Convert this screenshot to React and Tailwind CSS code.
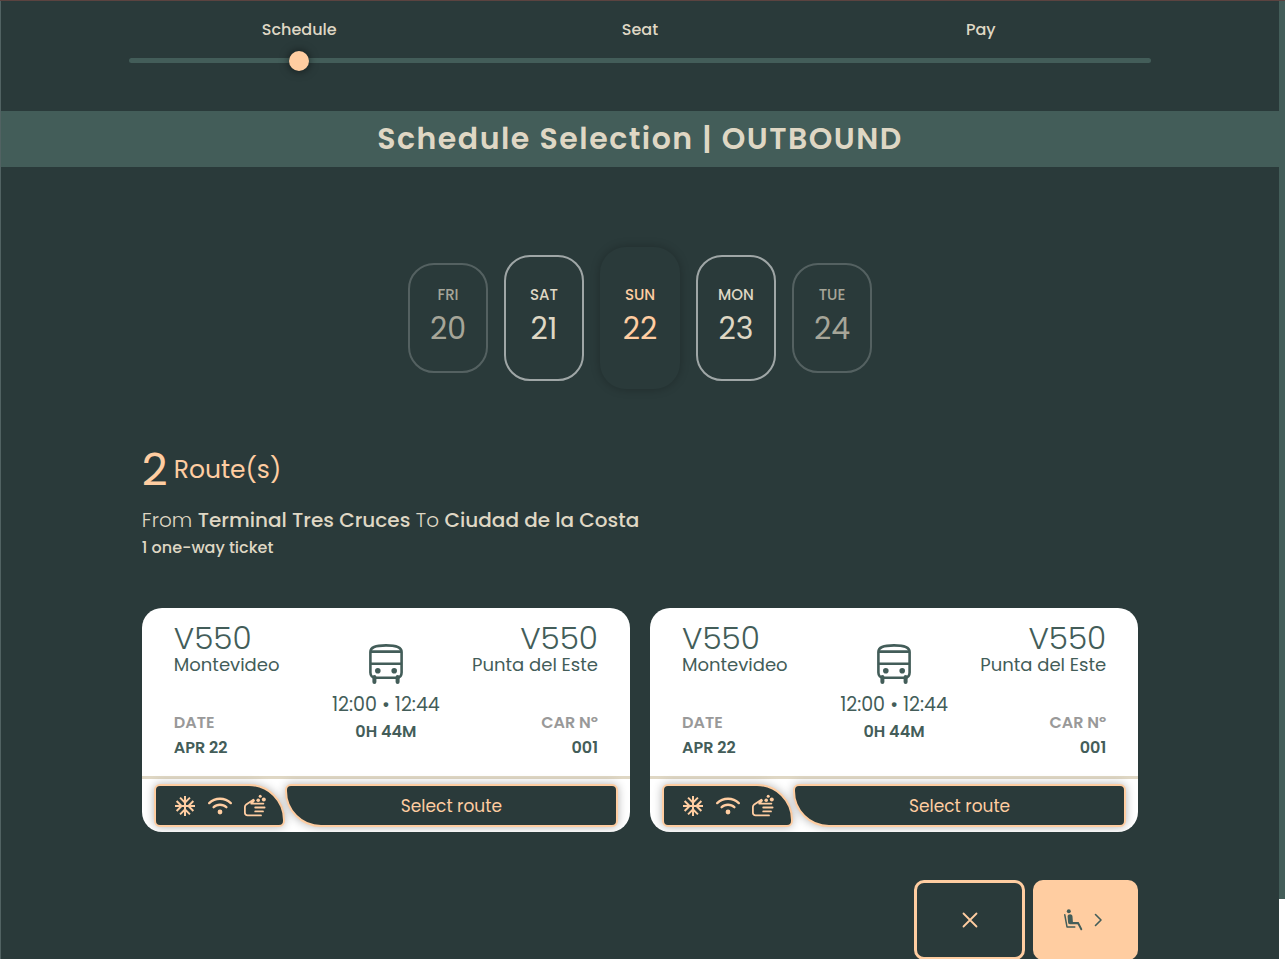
import React from "react";
import { MdAcUnit } from "react-icons/md";
import { FaWifi } from "react-icons/fa6";

const steps = ["Schedule", "Seat", "Pay"];

const days = [
  { name: "FRI", number: 20, style: "h-[110px] border-2 border-white/20 text-[#dfd7c4]/70" },
  { name: "SAT", number: 21, style: "h-[126px] border-2 border-white/55 text-[#dfd7c4]" },
  { name: "SUN", number: 22, style: "h-[142px] text-[#ffcda1] shadow-[0_0_10px_rgba(0,0,0,0.25)]" },
  { name: "MON", number: 23, style: "h-[126px] border-2 border-white/55 text-[#dfd7c4]" },
  { name: "TUE", number: 24, style: "h-[110px] border-2 border-white/20 text-[#dfd7c4]/70" },
];

const routes = [
  { id: 1, line: "V550", from: "Montevideo", to: "Punta del Este", times: "12:00 • 12:44", duration: "0H 44M", date: "APR 22", car: "001" },
  { id: 2, line: "V550", from: "Montevideo", to: "Punta del Este", times: "12:00 • 12:44", duration: "0H 44M", date: "APR 22", car: "001" },
];

function BusIcon() {
  return (
    <svg viewBox="0 0 34 40" className="h-10 w-[34px]" fill="none" stroke="currentColor" strokeWidth="2.6" strokeLinejoin="round" aria-hidden="true">
      <path d="M1.4 8 C1.4 3.5 6 1.4 17 1.4 C28 1.4 32.6 3.5 32.6 8 V28.5 C32.6 31.8 30.6 33.8 27.5 33.8 H6.5 C3.4 33.8 1.4 31.8 1.4 28.5Z" />
      <path d="M1.6 7.6 H32.4 M1.6 19.7 H32.4" />
      <path d="M5.4 33 V38 M28.6 33 V38" strokeWidth="4" strokeLinecap="round" />
      <circle cx="8.8" cy="26.8" r="2.8" fill="currentColor" stroke="none" />
      <circle cx="25.2" cy="26.8" r="2.8" fill="currentColor" stroke="none" />
    </svg>
  );
}

function WashIcon() {
  return (
    <svg viewBox="0 0 24 24" className="size-6 shrink-0" fill="none" stroke="currentColor" strokeWidth="1.8" strokeLinecap="round" strokeLinejoin="round" aria-hidden="true">
      <path d="M18 21.4 H4.6 C2.9 21.4 1.9 20.4 1.9 18.8 V13 C1.9 11.9 2.3 11.1 3.2 10.5 L10.4 5.7 L11 6.6 L8.2 9.6 H20.4" />
      <path d="M12.2 13.5 H21.6 M12.2 17.4 H20" />
      <g fill="currentColor" stroke="none">
        <circle cx="17.2" cy="2.3" r="1.5" />
        <circle cx="20.8" cy="5.6" r="2" />
        <circle cx="15.2" cy="6.2" r="1.8" />
      </g>
    </svg>
  );
}

function SeatIcon() {
  return (
    <svg viewBox="0 0 20 22" className="h-[22px] w-5" fill="none" stroke="currentColor" strokeLinecap="round" strokeLinejoin="round" aria-hidden="true">
      <circle cx="5.8" cy="2.2" r="2" fill="currentColor" stroke="none" />
      <path d="M4.6 7.4 C4.6 4.6 9.4 4.6 9.5 7.4 L9.9 13.1 H15.6 L16 15.2 H7 C5.8 15.2 5.2 14.6 5.1 13.6Z" fill="currentColor" stroke="none" />
      <path d="M15.2 14.2 L18.3 20.3" strokeWidth="1.9" />
      <path d="M1.8 5.8 L4 17.9 H11.8" strokeWidth="1.5" />
    </svg>
  );
}

function Progress() {
  return (
    <nav aria-label="Booking progress" className="mx-auto w-4/5 pt-[15px]">
      <ol className="grid grid-cols-3 text-center text-base leading-7 font-medium">
        {steps.map((step) => (
          <li key={step}>{step}</li>
        ))}
      </ol>
      <div className="mt-[7px] grid h-5 grid-cols-3 items-center">
        <div className="col-span-3 col-start-1 row-start-1 mb-px h-[5px] rounded-full bg-[#435d59]" />
        <span className="col-start-1 row-start-1 size-5 justify-self-center rounded-full bg-[#ffcda1] shadow-[0_0_10px_rgba(0,0,0,0.6)]" />
      </div>
    </nav>
  );
}

function RouteCard({ route }) {
  return (
    <article className="overflow-hidden rounded-[20px] bg-white text-[#435d59]">
      <div className="grid grid-cols-3 border-b-3 border-[#dfd7c4] px-8 pt-3 pb-4">
        <div className="flex flex-col justify-between">
          <div>
            <p className="text-[31px] leading-9 font-light">{route.line}</p>
            <p className="text-lg leading-[18px] whitespace-nowrap">{route.from}</p>
          </div>
          <dl className="text-base leading-[25px] font-semibold">
            <dt className="text-[#999999]">DATE</dt>
            <dd>{route.date}</dd>
          </dl>
        </div>
        <div className="flex flex-col items-center pt-6 pb-[15px]">
          <BusIcon />
          <p className="mt-[7px] text-[19px] leading-7 whitespace-nowrap">{route.times}</p>
          <p className="text-base leading-[26px] font-semibold">{route.duration}</p>
        </div>
        <div className="flex flex-col items-end justify-between text-right">
          <div>
            <p className="text-[31px] leading-9 font-light">{route.line}</p>
            <p className="text-lg leading-[18px] whitespace-nowrap">{route.to}</p>
          </div>
          <dl className="text-base leading-[25px] font-semibold">
            <dt className="text-[#999999]">CAR Nº</dt>
            <dd>{route.car}</dd>
          </dl>
        </div>
      </div>
      <div className="flex px-3 py-[5px] text-[#ffcda1]">
        <div className="flex h-[43px] w-[131px] items-center gap-[11px] rounded-[6px] rounded-tr-[36px] border-2 border-[#ffcda1] bg-[#2a3a3a] pl-[17px] shadow-[0_0_10px_rgba(0,0,0,0.3)]">
          <MdAcUnit className="size-6 shrink-0" aria-hidden="true" />
          <FaWifi className="size-6 shrink-0" aria-hidden="true" />
          <WashIcon />
        </div>
        <button type="button" className="h-[43px] flex-1 rounded-[6px] rounded-bl-[36px] border-2 border-[#ffcda1] bg-[#2a3a3a] pt-0.5 text-[17px] shadow-[0_0_10px_rgba(0,0,0,0.3)]">
          Select route
        </button>
      </div>
    </article>
  );
}

export default function App() {
  return (
    <div className="flex h-screen overflow-hidden border-t border-[#5b4340] bg-[#2a3a3a] font-['Poppins','Inter',sans-serif] text-[#dfd7c4]">
      <main className="min-w-0 flex-1 border-l border-[#516262]">
        <Progress />
        <h1 className="mt-10 bg-[#435d59] text-center text-3xl leading-[56px] font-semibold tracking-wider">Schedule Selection | OUTBOUND</h1>

        <div className="mt-20 flex items-center justify-center gap-4">
          {days.map((day) => (
            <button key={day.name} type="button" className={`flex w-20 flex-col items-center justify-center rounded-[26px] pb-0.5 ${day.style}`}>
              <span className="text-[15px] leading-6 font-medium">{day.name}</span>
              <span className="text-3xl leading-11">{day.number}</span>
            </button>
          ))}
        </div>

        <div className="mx-auto w-4/5 px-[13px]">
          <section className="mt-[53px]">
            <h2 className="flex items-center gap-1.5 leading-14 text-[#ffcda1]">
              <span className="text-[45px]">2</span>
              <span className="text-[25px]">Route(s)</span>
            </h2>
            <p className="mt-1.5 text-xl leading-8 font-light">
              From <strong className="font-medium">Terminal Tres Cruces</strong> To <strong className="font-medium">Ciudad de la Costa</strong>
            </p>
            <p className="text-base leading-6 font-medium">1 one-way ticket</p>
          </section>

          <section aria-label="Routes" className="mt-12 grid grid-cols-2 gap-5">
            {routes.map((route) => (
              <RouteCard key={route.id} route={route} />
            ))}
          </section>

          <div className="mt-12 flex justify-end gap-2">
            <button type="button" aria-label="Cancel" className="flex h-20 w-[111px] items-center justify-center rounded-[10px] border-3 border-[#ffcda1] text-[#ffcda1]">
              <svg viewBox="0 0 16 16" className="size-4" stroke="currentColor" strokeWidth="1.8" strokeLinecap="round" aria-hidden="true">
                <path d="M1.5 1.5 14.5 14.5M14.5 1.5 1.5 14.5" />
              </svg>
            </button>
            <button type="button" aria-label="Continue to seat" className="flex h-20 w-[105px] items-center justify-center gap-[11px] rounded-[10px] bg-[#ffcda1] pr-1.5 text-[#435d59]">
              <SeatIcon />
              <svg viewBox="0 0 9 14" className="h-3.5 w-[9px]" fill="none" stroke="currentColor" strokeWidth="1.6" strokeLinecap="round" strokeLinejoin="round" aria-hidden="true">
                <path d="M1.5 1.5 7 7 1.5 12.5" />
              </svg>
            </button>
          </div>
        </div>
      </main>
      <div aria-hidden="true" className="w-1.5 bg-white">
        <div className="h-15/16 bg-[#435d59]" />
      </div>
    </div>
  );
}
